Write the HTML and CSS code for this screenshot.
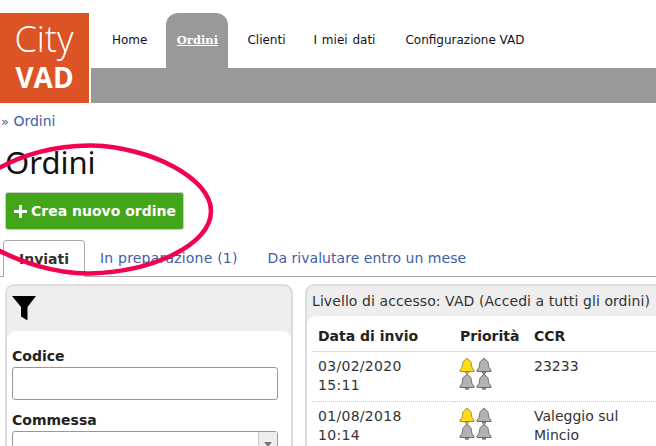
FILE: index.html
```html
<!DOCTYPE html>
<html lang="it">
<head>
<meta charset="utf-8">
<title>Ordini</title>
<link rel="stylesheet" href="styles.css">
</head>
<body>
<svg width="0" height="0" class="defs">
  <symbol id="bell" viewBox="0 0 16 16">
    <path d="M8 .5c.8 0 1.300.5 1.300 1.200 2.100.6 3 2.300 3.100 4.600.1 2.700.8 4 2.600 5.700v1.500H1v-1.500C2.800 10.300 3.500 9 3.600 6.300 3.700 4 4.600 2.400 6.700 1.700 6.700 1 7.200.5 8 .5z"/>
    <path d="M6.200 14h3.600C9.600 15.200 8.900 16 8 16s-1.600-.8-1.800-2z" class="clap"/>
  </symbol>
</svg>
<header class="top">
  <div class="logo"><span class="logo-city">City</span><span class="logo-vad">VAD</span></div>
  <div class="head-main">
    <nav class="nav">
      <a class="nav-item">Home</a>
      <a class="nav-item active">Ordini</a>
      <a class="nav-item">Clienti</a>
      <a class="nav-item">I miei dati</a>
      <a class="nav-item">Configurazione VAD</a>
    </nav>
    <div class="bar"></div>
  </div>
</header>
<div class="crumb"><span class="crumb-sep">»</span> Ordini</div>
<h1 class="title">Ordini</h1>
<button class="create"><span class="plus"><i></i><i></i></span>Crea nuovo ordine</button>
<div class="tabs">
  <a class="tab active">Inviati</a>
  <a class="tab">In preparazione (1)</a>
  <a class="tab">Da rivalutare entro un mese</a>
</div>
<main class="content">
  <section class="panel filter">
    <div class="panel-head">
      <svg class="funnel" width="24" height="24" viewBox="0 0 24 24"><path d="M0 0h24L15.500 11v12.500c0 .5-.4.7-.8.5L9 20.500V11z"/></svg>
    </div>
    <div class="panel-body form">
      <label class="lbl">Codice</label>
      <div class="input"></div>
      <label class="lbl second">Commessa</label>
      <div class="input select"><span class="select-btn"><i></i></span></div>
    </div>
  </section>
  <section class="panel orders">
    <div class="panel-head access">Livello di accesso: VAD (Accedi a tutti gli ordini)</div>
    <div class="panel-body table-wrap">
      <table class="table">
        <thead>
          <tr><th class="c-date">Data di invio</th><th class="c-pri">Priorità</th><th>CCR</th></tr>
        </thead>
        <tbody>
          <tr>
            <td class="date">03/02/2020<br>15:11</td>
            <td><div class="bells"><svg class="bell on"><use href="#bell"/></svg><svg class="bell"><use href="#bell"/></svg><svg class="bell"><use href="#bell"/></svg><svg class="bell"><use href="#bell"/></svg></div></td>
            <td>23233</td>
          </tr>
          <tr>
            <td class="date">01/08/2018<br>10:14</td>
            <td><div class="bells"><svg class="bell on"><use href="#bell"/></svg><svg class="bell"><use href="#bell"/></svg><svg class="bell"><use href="#bell"/></svg><svg class="bell"><use href="#bell"/></svg></div></td>
            <td>Valeggio sul<br>Mincio</td>
          </tr>
        </tbody>
      </table>
    </div>
  </section>
</main>
<svg class="scribble" width="656" height="446" viewBox="0 0 656 446">
  <path d="M-6 171C20 155 55 145 92 145.500C150 147 211 178 211 211C211 246 150 272 90 273.500C55 274 20 262 -6 248" fill="none" stroke="#f3004f" stroke-width="4.500"/>
</svg>
</body>
</html>
```
FILE: styles.css
```css
html, body { margin: 0; padding: 0; }
body {
  width: 656px;
  height: 446px;
  overflow: hidden;
  position: relative;
  background: #fff;
  font-family: "DejaVu Sans", Verdana, sans-serif;
  font-size: 14px;
  color: #222;
}
.defs { position: absolute; }
.top { display: flex; gap: 2px; padding-top: 13px; height: 90px; }
.logo {
  width: 89px;
  height: 90px;
  background: #dc5426;
  color: #fff;
  display: flex;
  flex-direction: column;
  align-items: center;
  font-family: "Open Sans", sans-serif;
}
.logo-city { font-size: 36px; font-weight: 300; margin: 8px 1px 0 0; line-height: 36px; }
.logo-vad { font-size: 28px; font-weight: 700; line-height: 26px; margin-top: 7px; }
.head-main { flex: 1; display: flex; flex-direction: column; }
.nav { display: flex; height: 55px; font-size: 12px; color: #112; padding-left: 2px; }
.nav-item { padding: 20px 15px 0; line-height: 14px; }
.nav-item:nth-child(1) { padding: 20px 19px; }
.nav-item:nth-child(3) { padding-left: 19px; padding-right: 13px; }
.nav-item:nth-child(4) { word-spacing: 1px; }
.nav-item.active {
  width: 62px;
  box-sizing: border-box;
  padding: 20px 0 0;
  text-align: center;
  background: #999;
  color: #fff;
  border-radius: 12px 12px 0 0;
  font-family: "DejaVu Serif", serif;
  font-size: 11.500px;
  font-weight: 700;
  text-decoration: underline;
}
.bar { height: 35px; background: #999; }
.crumb { margin-top: 10px; height: 17px; line-height: 17px; color: #3f5ea8; padding-left: 1px; font-size: 14px; }
.crumb-sep { font-size: 13px; }
.title {
  margin: 13px 0 0 5px;
  font-family: "Noto Sans", sans-serif;
  font-size: 31px;
  font-weight: 400;
  line-height: 38px;
  color: #111;
}
.create {
  display: flex;
  align-items: center;
  margin: 11px 0 0 5px;
  width: 179px;
  height: 38px;
  padding: 0 0 0 8px;
  box-sizing: border-box;
  background: #43a519;
  border: 1px solid #ccc;
  border-radius: 3px;
  color: #fff;
  font-family: "DejaVu Sans", sans-serif;
  font-size: 14px;
  font-weight: 700;
}
.plus { position: relative; width: 13px; height: 13px; margin-right: 4px; }
.plus i { position: absolute; background: #fff; }
.plus i:first-child { left: 0; right: 0; top: 5px; height: 3px; }
.plus i:last-child { top: 0; bottom: 0; left: 5px; width: 3px; }
.tabs {
  display: flex;
  margin-top: 10px;
  height: 36px;
  border-bottom: 1px solid #aaa;
  padding-left: 3px;
  font-size: 14px;
  color: #3f5ea8;
}
.tab { padding: 0 15px; line-height: 36px; }
.tab:nth-child(2) { letter-spacing: .2px; }
.tab:nth-child(3) { letter-spacing: .04px; }
.tab.active {
  width: 82px;
  box-sizing: border-box;
  padding: 0;
  text-align: center;
  border: 1px solid #aaa;
  border-bottom: 0;
  border-radius: 4px 4px 0 0;
  height: 37px;
  background: #fff;
  color: #333;
  font-weight: 700;
}
.content { display: flex; gap: 12px; margin: 7px 0 0 5px; height: 162px; overflow: hidden; }
.panel {
  border: 2px solid #ddd;
  border-radius: 9px;
  background: #eee;
  box-sizing: border-box;
}
.filter { width: 288px; height: 200px; flex: none; }
.orders { width: 400px; height: 200px; flex: none; }
.panel-head { height: 45px; }
.funnel { display: block; padding: 10px 0 0 5px; }
.access { height: 30px; line-height: 30px; padding-left: 5px; font-size: 14px; letter-spacing: .08px; white-space: nowrap; color: #333; }
.panel-body { background: #fff; border-radius: 9px 9px 0 0; height: 200px; }
.form { padding: 14px 13px 0 5px; box-sizing: border-box; }
.lbl { display: block; font-weight: 700; font-size: 14px; line-height: 22px; color: #222; }
.lbl.second { margin-top: 9px; }
.input {
  height: 31px;
  border: 1px solid #999;
  border-radius: 3px;
  background: #fff;
}
.select { position: relative; height: 40px; }
.select-btn { position: absolute; right: 0; top: 0; bottom: 0; width: 18px; background: #eee; border-left: 1px solid #ccc; }
.select-btn i {
  position: absolute;
  left: 5px;
  top: 10px;
  border: 4px solid transparent;
  border-top: 5px solid #777;
}
.table-wrap { padding: 0 0 0 5px; }
.table { border-collapse: collapse; font-size: 14px; width: 390px; table-layout: fixed; }
.table th { text-align: left; font-weight: 700; height: 35px; padding: 5px 0 0 6px; box-sizing: border-box; border-bottom: 1px solid #ddd; color: #222; }
.table td { vertical-align: top; padding: 5px 0 0 6px; line-height: 19.500px; height: 44px; color: #333; border-bottom: 1px dotted #ccc; }
.table td.date { letter-spacing: .3px; }
.c-date { width: 142px; }
.c-pri { width: 74px; }
.bells { display: grid; grid-template-columns: 16.500px 16.500px; grid-auto-rows: 16px; width: 33px; margin-left: -1px; padding-top: 1px; }
.bell { display: block; width: 16px; height: 16px; fill: #b2b2b2; stroke: #555; stroke-width: .8px; }
.bell.on { fill: #ffd91c; stroke: #8a7a10; }
.scribble { position: absolute; left: 0; top: 0; pointer-events: none; }
```
